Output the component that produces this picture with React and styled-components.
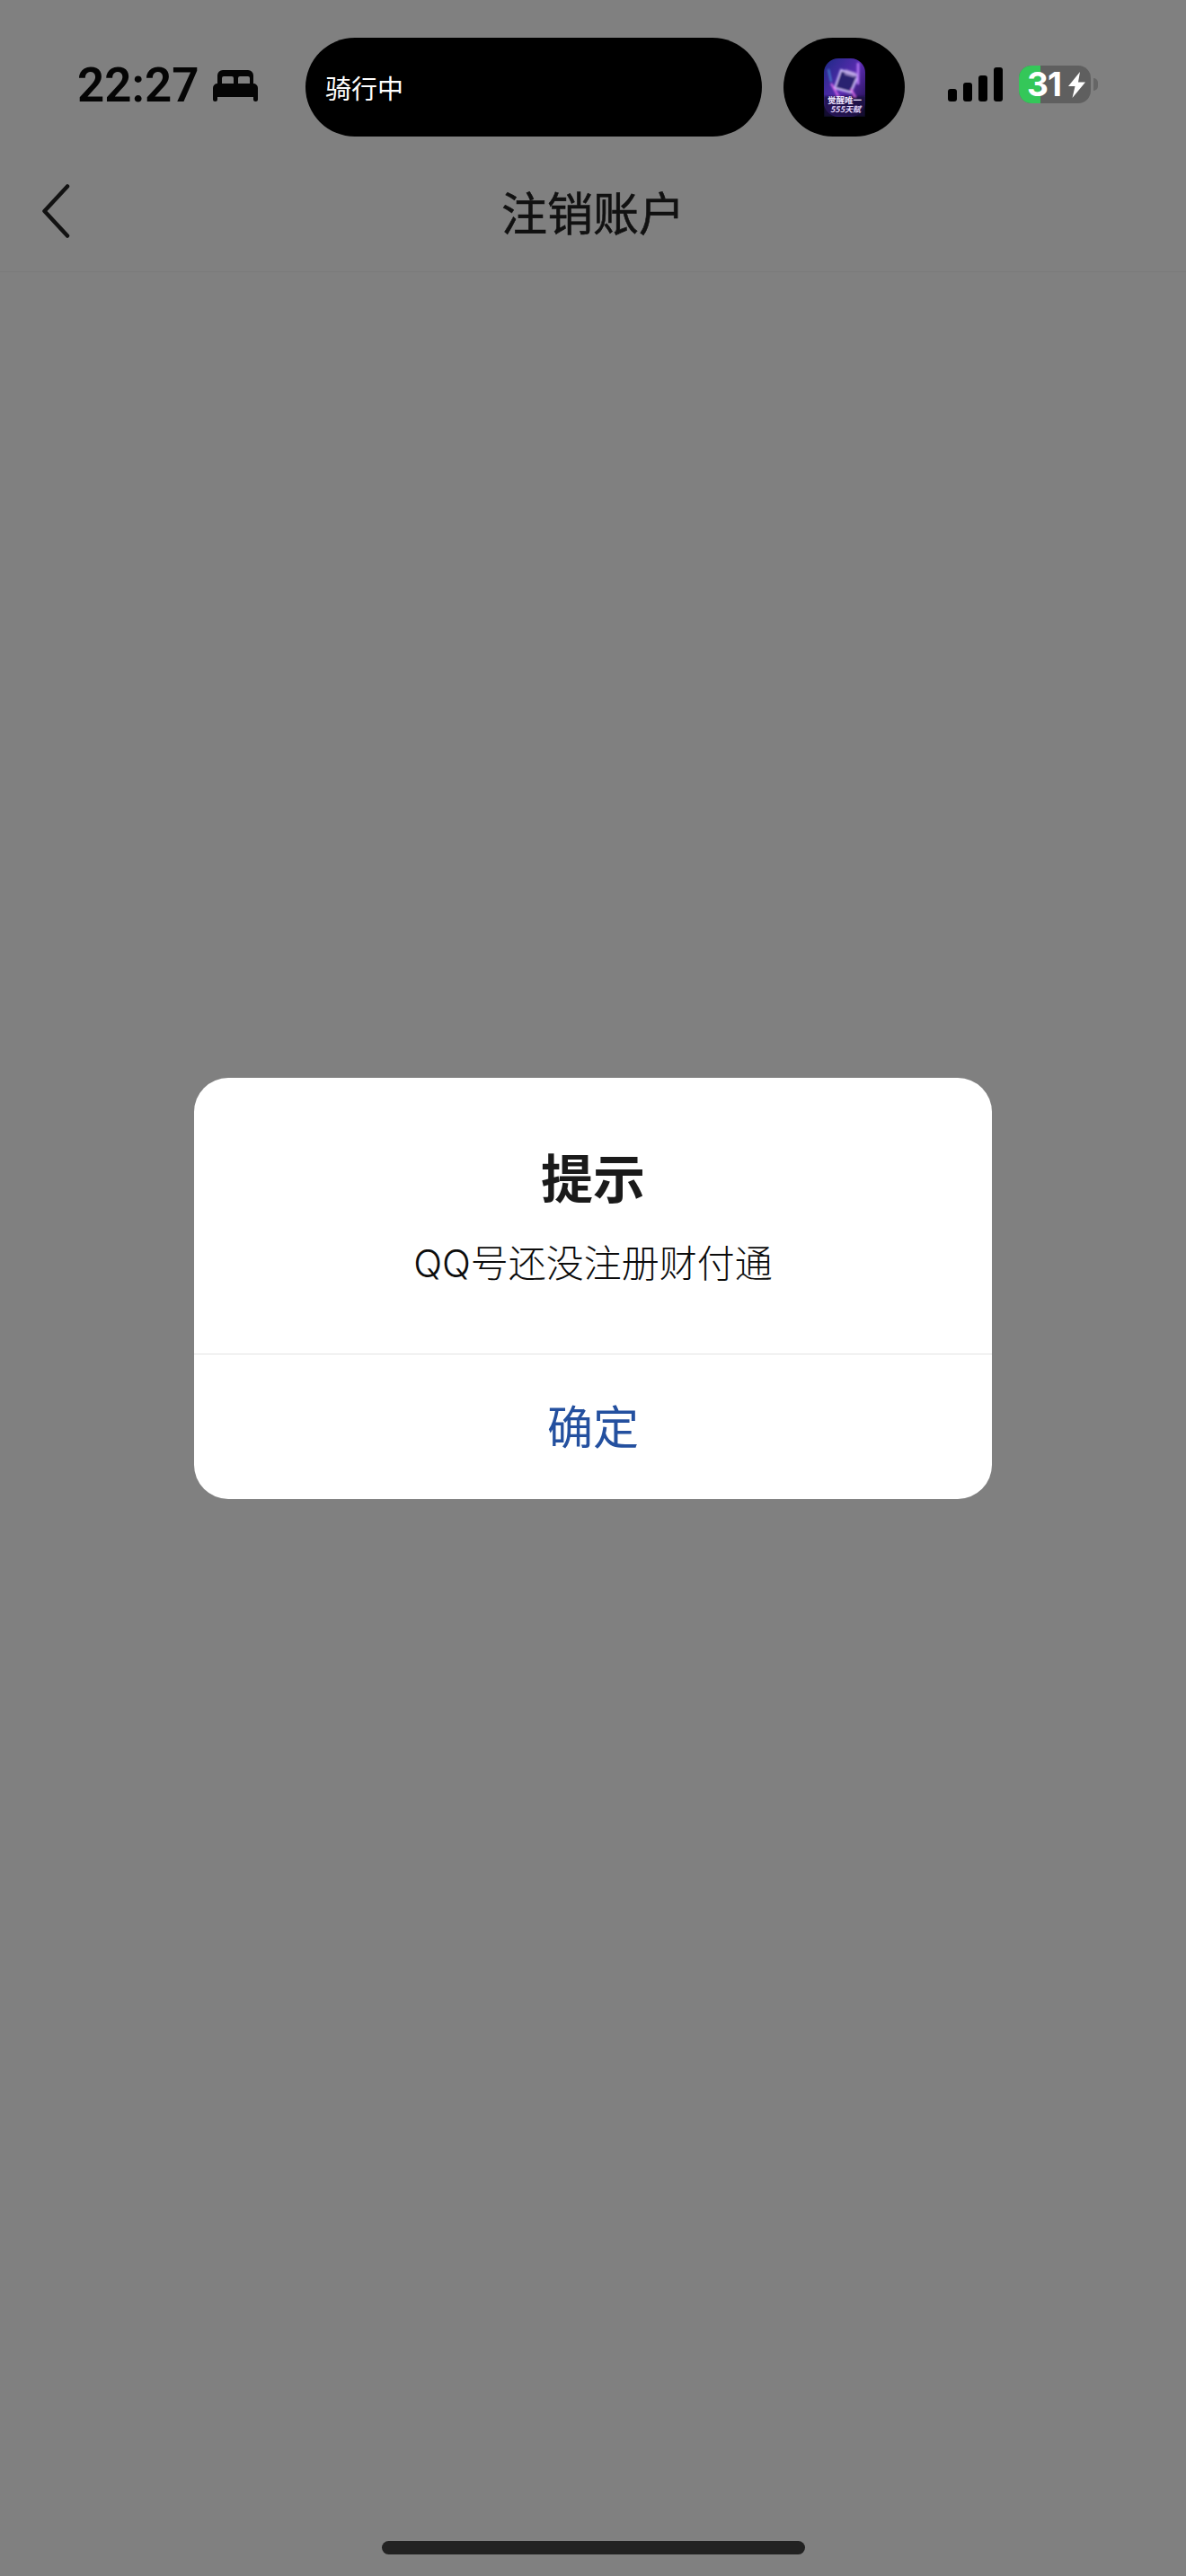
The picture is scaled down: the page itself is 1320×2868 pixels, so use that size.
import React from "react";
import styled, { createGlobalStyle } from "styled-components";

const GlobalStyle = createGlobalStyle`
  * {
    box-sizing: border-box;
  }
  html,
  body {
    margin: 0;
    padding: 0;
    background: #808080;
    font-family: "Inter", "Noto Sans CJK SC", sans-serif;
  }
`;

function BedIcon() {
  return (
    <svg width="50" height="35" viewBox="0 0 50 35" fill="#050505">
      <path
        fillRule="evenodd"
        d="M11 0h28a6 6 0 0 1 6 6v10H5V6a6 6 0 0 1 6-6zM10 16h13v-7q0-2-2-2H12q-2 0-2 2zM28 16h13v-7q0-2-2-2H30q-2 0-2 2z"
      />
      <path d="M5 15h40a5 5 0 0 1 5 5v12.500a2.500 2.500 0 0 1-5 0V30H5v2.500a2.500 2.500 0 0 1-5 0V20a5 5 0 0 1 5-5z" />
    </svg>
  );
}

function BoltIcon() {
  return (
    <svg width="19" height="29" viewBox="0 0 19 29" fill="#fff">
      <path d="M13 0L0 16h7.500L4.500 29 19 11.500h-8z" />
    </svg>
  );
}

function BackIcon() {
  return (
    <svg width="32" height="60" viewBox="0 0 32 60" fill="none">
      <path d="M29 2.500L3.500 30 29 57.500" stroke="#121212" strokeWidth="4.500" strokeLinecap="round" strokeLinejoin="round" />
    </svg>
  );
}

function GameThumb() {
  return (
    <svg width="46" height="65" viewBox="0 0 46 65">
      <defs>
        <linearGradient id="thumbBg" x1="0" y1="0" x2="1" y2="1">
          <stop offset="0" stopColor="#1d2a86" />
          <stop offset="0.5" stopColor="#5a2bb0" />
          <stop offset="1" stopColor="#180c3c" />
        </linearGradient>
        <filter id="soft">
          <feGaussianBlur stdDeviation="0.8" />
        </filter>
      </defs>
      <rect width="46" height="65" rx="16" fill="url(#thumbBg)" />
      <g filter="url(#soft)">
        <rect x="0" y="42" width="46" height="23" fill="#1a0d40" opacity="0.8" />
        <path d="M19 13L38 19 30 38 12 33z" fill="#2b2370" stroke="#d2c0ff" strokeWidth="2" />
        <path d="M24 12l12 4-2 5-11-3z" fill="#c4aee8" opacity="0.7" />
        <path d="M8 28l8 14M30 34l5 9" stroke="#e56ff0" strokeWidth="2" />
        <path d="M38 5v24" stroke="#b678f5" strokeWidth="2.500" />
        <path d="M5 12l3 14" stroke="#4fa2e8" strokeWidth="2" opacity="0.7" />
      </g>
      <text x="23" y="50" textAnchor="middle" fontSize="9.500" fontWeight="700" fill="#efe6ff" fontFamily="Noto Sans CJK SC">觉醒唯一</text>
      <text x="24" y="60" textAnchor="middle" fontSize="9" fontWeight="700" fontStyle="italic" fill="#e2d6fb" fontFamily="Noto Sans CJK SC">555天赋</text>
    </svg>
  );
}

export default function App() {
  const signal = [14, 21, 29, 38];
  const level = 30;

  return (
    <Page>
      <GlobalStyle />
      <StatusBar>
        <TimeGroup>
          <Time>22:27</Time>
          <BedIcon />
        </TimeGroup>
        <ActivityPill>
          <ActivityLabel>骑行中</ActivityLabel>
        </ActivityPill>
        <AppPill>
          <GameThumb />
        </AppPill>
        <SignalBars>
          {signal.map((h) => (
            <SignalBar key={h} $height={h} />
          ))}
        </SignalBars>
        <BatteryWrap>
          <Battery>
            <BatteryFill style={{ width: `${level}%` }} />
            <BatteryLabel>
              <BatteryText>31</BatteryText>
              <BoltIcon />
            </BatteryLabel>
          </Battery>
          <BatteryCap />
        </BatteryWrap>
      </StatusBar>

      <NavBar>
        <BackButton>
          <BackIcon />
        </BackButton>
        <NavTitle>注销账户</NavTitle>
      </NavBar>

      <Body />

      <HomeBarWrap>
        <HomeBar />
      </HomeBarWrap>

      <Backdrop>
        <Dialog>
          <DialogContent>
            <DialogTitle>提示</DialogTitle>
            <DialogMessage>QQ号还没注册财付通</DialogMessage>
          </DialogContent>
          <DialogButton>确定</DialogButton>
        </Dialog>
      </Backdrop>
    </Page>
  );
}

const Page = styled.div`
  position: relative;
  width: 1320px;
  height: 2868px;
  display: flex;
  flex-direction: column;
  overflow: hidden;
  background: #808080;
`;

const StatusBar = styled.div`
  height: 152px;
  padding-top: 42px;
  display: flex;
  align-items: flex-start;
`;

const TimeGroup = styled.div`
  width: 340px;
  height: 110px;
  padding: 0 0 0 86px;
  display: flex;
  align-items: center;
  gap: 15px;
  svg {
    margin-top: -3px;
  }
`;

const Time = styled.span`
  font-family: "Roboto", "Liberation Sans", sans-serif;
  font-size: 53px;
  line-height: 60px;
  font-weight: 600;
  color: #050505;
  margin-top: -5px;
`;

const ActivityPill = styled.div`
  width: 508px;
  height: 110px;
  padding-left: 22px;
  display: flex;
  align-items: center;
  background: #000;
  border-radius: 55px;
`;

const ActivityLabel = styled.span`
  font-family: "Noto Sans CJK SC", sans-serif;
  font-size: 29px;
  line-height: 40px;
  color: #fff;
`;

const AppPill = styled.div`
  width: 135px;
  height: 110px;
  margin-left: 24px;
  display: flex;
  align-items: center;
  justify-content: center;
  background: #000;
  border-radius: 55px;
`;

const SignalBars = styled.div`
  height: 38px;
  margin: 33px 0 0 48px;
  display: flex;
  align-items: flex-end;
  gap: 7px;
`;

const SignalBar = styled.div`
  width: 10px;
  height: ${({ $height }) => $height}px;
  background: #000;
  border-radius: 3px;
`;

const BatteryWrap = styled.div`
  margin: 31px 0 0 18px;
  display: flex;
  align-items: center;
  gap: 3px;
`;

const Battery = styled.div`
  position: relative;
  width: 80px;
  height: 42px;
  background: #5f5f5f;
  border-radius: 14px;
`;

const BatteryFill = styled.div`
  height: 100%;
  background: #34c759;
  border-radius: 14px 0 0 14px;
`;

const BatteryLabel = styled.div`
  position: absolute;
  inset: 0;
  padding-left: 9px;
  display: flex;
  align-items: center;
  gap: 8px;
`;

const BatteryText = styled.span`
  font-family: "Inter", "Liberation Sans", sans-serif;
  font-size: 37px;
  line-height: 42px;
  font-weight: 700;
  letter-spacing: -1px;
  color: #fff;
`;

const BatteryCap = styled.div`
  width: 5px;
  height: 14px;
  background: #666;
  border-radius: 0 5px 5px 0;
`;

const NavBar = styled.div`
  height: 151px;
  padding-top: 16px;
  display: grid;
  grid-template-columns: 1fr auto 1fr;
  align-items: center;
  border-bottom: 1px solid #7b7b7b;
`;

const BackButton = styled.div`
  padding-left: 46px;
  display: flex;
  align-items: center;
`;

const NavTitle = styled.h1`
  margin: 0;
  font-family: "Noto Sans CJK SC", sans-serif;
  font-size: 51px;
  line-height: 60px;
  font-weight: 400;
  color: #111;
  -webkit-text-stroke: 0.6px #111;
`;

const Body = styled.div`
  flex: 1;
`;

const HomeBarWrap = styled.div`
  height: 39px;
  display: flex;
  justify-content: center;
`;

const HomeBar = styled.div`
  width: 471px;
  height: 15px;
  background: #222;
  border-radius: 8px;
`;

const Backdrop = styled.div`
  position: absolute;
  inset: 0;
  display: flex;
  align-items: center;
  justify-content: center;
`;

const Dialog = styled.div`
  width: 888px;
  height: 469px;
  display: flex;
  flex-direction: column;
  background: #fff;
  border-radius: 38px;
  overflow: hidden;
`;

const DialogContent = styled.div`
  height: 308px;
  padding-top: 74px;
  display: flex;
  flex-direction: column;
  align-items: center;
  gap: 35px;
  border-bottom: 1px solid #e2e2e2;
`;

const DialogTitle = styled.h2`
  margin: 0;
  font-family: "Noto Sans CJK SC", sans-serif;
  font-size: 58px;
  line-height: 70px;
  font-weight: 700;
  color: #1a1a1a;
`;

const DialogMessage = styled.p`
  margin: 0;
  font-family: "Inter", "Noto Sans CJK SC", sans-serif;
  font-size: 42px;
  line-height: 56px;
  font-weight: 300;
  color: #0c0c0c;
`;

const DialogButton = styled.div`
  flex: 1;
  padding-bottom: 4px;
  display: flex;
  align-items: center;
  justify-content: center;
  font-family: "Noto Sans CJK SC", sans-serif;
  font-size: 51px;
  line-height: 60px;
  color: #24509f;
`;
